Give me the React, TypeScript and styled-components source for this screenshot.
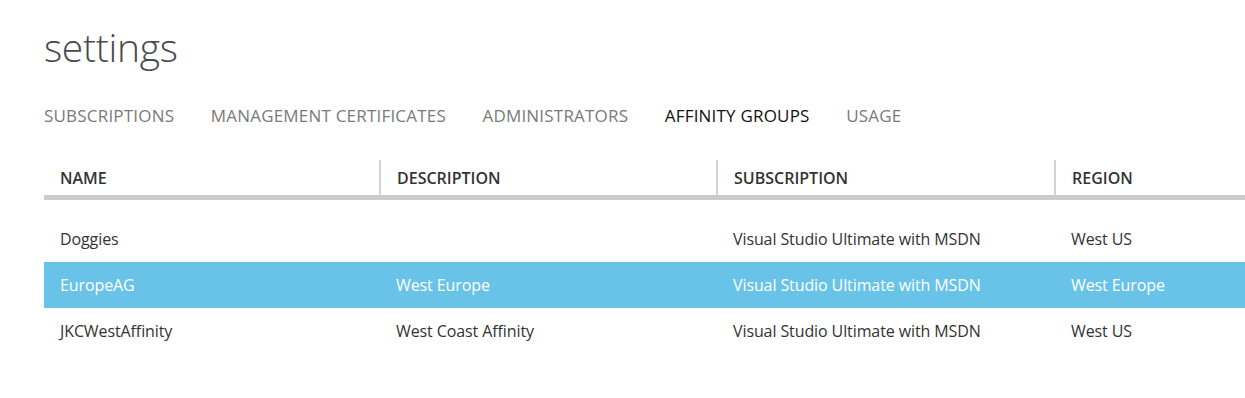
import React from "react";
import styled, { createGlobalStyle } from "styled-components";

const Global = createGlobalStyle`
  html, body { margin: 0; padding: 0; background: #fff; }
  body { font-family: "Open Sans", "Noto Sans", sans-serif; overflow: hidden; }
`;

const Page = styled.div`
  padding: 22px 0 0 44px;
  width: 1245px;
  box-sizing: border-box;
`;

const Title = styled.h1`
  margin: 0;
  font-weight: 300;
  font-size: 39px;
  line-height: 50px;
  color: #4a4a4a;
  letter-spacing: -0.3px;
`;

const Tabs = styled.nav`
  display: flex;
  gap: 36.5px;
  margin-top: 31px;
`;

const Tab = styled.span<{ $active?: boolean }>`
  font-size: 17px;
  line-height: 26px;
  letter-spacing: 0.2px;
  color: ${(p) => (p.$active ? "#111" : "#7a7a7a")};
`;

const Table = styled.div`
  margin-top: 31px;
`;

const Grid = styled.div`
  display: grid;
  grid-template-columns: 336px 337px 338px 1fr;
`;

const HeaderRow = styled(Grid)`
  height: 35px;
  border-bottom: 5px solid #cccccc;
`;

const HeaderCell = styled.div<{ $sep?: boolean }>`
  display: flex;
  align-items: center;
  padding-left: 16px;
  font-size: 16px;
  font-weight: 600;
  color: #333;
  ${(p) => (p.$sep ? "border-left: 2px solid #d4d4d4; margin-left: -1px;" : "")}
`;

const Body = styled.div`
  padding-top: 16px;
`;

const Row = styled(Grid)<{ $selected?: boolean }>`
  height: 46px;
  background: ${(p) => (p.$selected ? "#69c3e8" : "transparent")};
  color: ${(p) => (p.$selected ? "#ffffff" : "#333333")};
`;

const Cell = styled.div`
  display: flex;
  align-items: center;
  padding-left: 16px;
  font-size: 16px;
  letter-spacing: -0.1px;
`;

const rows = [
  { name: "Doggies", desc: "", sub: "Visual Studio Ultimate with MSDN", region: "West US" },
  { name: "EuropeAG", desc: "West Europe", sub: "Visual Studio Ultimate with MSDN", region: "West Europe", selected: true },
  { name: "JKCWestAffinity", desc: "West Coast Affinity", sub: "Visual Studio Ultimate with MSDN", region: "West US" },
];

export default function App() {
  return (
    <>
      <Global />
      <Page>
        <Title>settings</Title>
        <Tabs>
          <Tab>SUBSCRIPTIONS</Tab>
          <Tab>MANAGEMENT CERTIFICATES</Tab>
          <Tab>ADMINISTRATORS</Tab>
          <Tab $active>AFFINITY GROUPS</Tab>
          <Tab>USAGE</Tab>
        </Tabs>
        <Table>
          <HeaderRow>
            <HeaderCell>NAME</HeaderCell>
            <HeaderCell $sep>DESCRIPTION</HeaderCell>
            <HeaderCell $sep>SUBSCRIPTION</HeaderCell>
            <HeaderCell $sep>REGION</HeaderCell>
          </HeaderRow>
          <Body>
            {rows.map((r) => (
              <Row key={r.name} $selected={r.selected}>
                <Cell>{r.name}</Cell>
                <Cell>{r.desc}</Cell>
                <Cell>{r.sub}</Cell>
                <Cell>{r.region}</Cell>
              </Row>
            ))}
          </Body>
        </Table>
      </Page>
    </>
  );
}
